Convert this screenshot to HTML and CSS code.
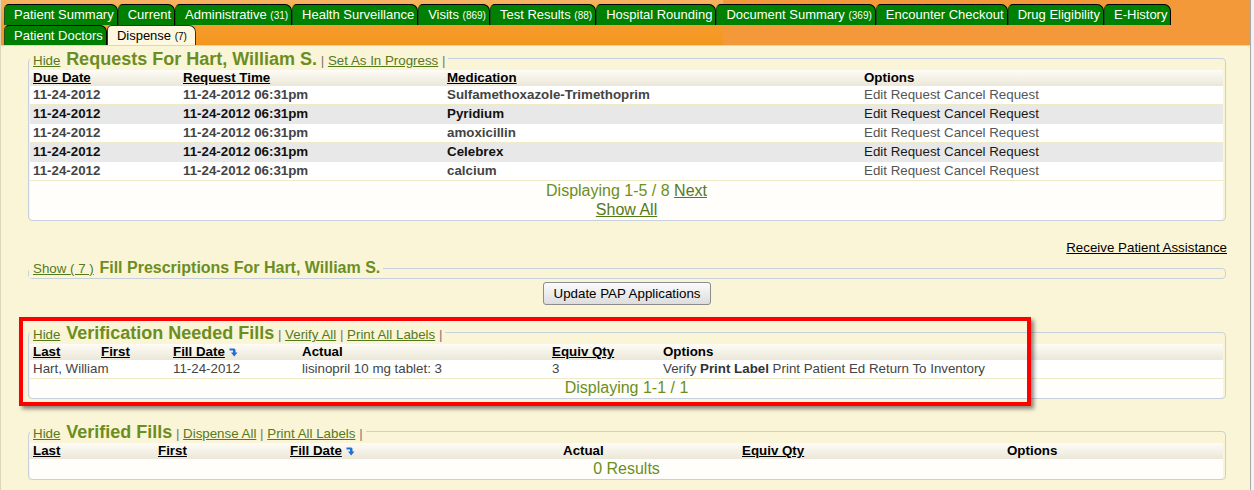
FILE: index.html
```html
<!DOCTYPE html>
<html lang="en">
<head>
  <meta charset="UTF-8">
  <title>Dispense</title>
  <link rel="stylesheet" href="styles.css">
</head>
<body>
<div class="page">

  <div class="header">
    <ul class="tabs tabs-top">
      <li><a href="#">Patient Summary</a></li>
      <li><a href="#">Current</a></li>
      <li><a href="#">Administrative <small>(31)</small></a></li>
      <li><a href="#">Health Surveillance</a></li>
      <li><a href="#">Visits <small>(869)</small></a></li>
      <li><a href="#">Test Results <small>(88)</small></a></li>
      <li><a href="#">Hospital Rounding</a></li>
      <li><a href="#">Document Summary <small>(369)</small></a></li>
      <li><a href="#">Encounter Checkout</a></li>
      <li><a href="#">Drug Eligibility</a></li>
      <li><a href="#">E-History</a></li>
    </ul>
    <ul class="tabs tabs-bottom">
      <li><a href="#">Patient Doctors</a></li>
      <li class="active"><a href="#">Dispense <small>(7)</small></a></li>
    </ul>
  </div>

  <div class="content">

    <!-- Requests -->
    <fieldset class="panel">
      <legend>
        <a href="#" class="lnk">Hide</a>
        <span class="title">Requests For Hart, William S.</span>
        <span class="sep">|</span> <a href="#" class="lnk">Set As In Progress</a> <span class="sep">|</span>
      </legend>
      <table class="grid">
        <colgroup>
          <col style="width:150px"><col style="width:264px"><col style="width:417px"><col>
        </colgroup>
        <thead>
          <tr>
            <th><a href="#">Due Date</a></th>
            <th><a href="#">Request Time</a></th>
            <th><a href="#">Medication</a></th>
            <th>Options</th>
          </tr>
        </thead>
        <tbody class="bold-rows">
          <tr><td>11-24-2012</td><td>11-24-2012 06:31pm</td><td>Sulfamethoxazole-Trimethoprim</td><td class="opt">Edit Request Cancel Request</td></tr>
          <tr><td>11-24-2012</td><td>11-24-2012 06:31pm</td><td>Pyridium</td><td class="opt">Edit Request Cancel Request</td></tr>
          <tr><td>11-24-2012</td><td>11-24-2012 06:31pm</td><td>amoxicillin</td><td class="opt">Edit Request Cancel Request</td></tr>
          <tr><td>11-24-2012</td><td>11-24-2012 06:31pm</td><td>Celebrex</td><td class="opt">Edit Request Cancel Request</td></tr>
          <tr><td>11-24-2012</td><td>11-24-2012 06:31pm</td><td>calcium</td><td class="opt">Edit Request Cancel Request</td></tr>
        </tbody>
      </table>
      <div class="paging two-line">
        Displaying 1-5 / 8 <a href="#">Next</a><br>
        <a href="#">Show All</a>
      </div>
    </fieldset>

    <div class="assist"><a href="#">Receive Patient Assistance</a></div>

    <!-- Fill prescriptions (collapsed) -->
    <fieldset class="panel collapsed">
      <legend>
        <a href="#" class="lnk">Show ( 7 )</a>
        <span class="title small-title">Fill Prescriptions For Hart, William S.</span>
      </legend>
    </fieldset>

    <div class="btn-row">
      <button type="button">Update PAP Applications</button>
    </div>

    <!-- Verification needed -->
    <div class="marked">
      <fieldset class="panel">
        <legend>
          <a href="#" class="lnk">Hide</a>
          <span class="title">Verification Needed Fills</span>
          <span class="sep">|</span> <a href="#" class="lnk">Verify All</a> <span class="sep">|</span> <a href="#" class="lnk">Print All Labels</a> <span class="sep">|</span>
        </legend>
        <table class="grid">
          <colgroup>
            <col style="width:68px"><col style="width:72px"><col style="width:129px"><col style="width:250px"><col style="width:111px"><col>
          </colgroup>
          <thead>
            <tr>
              <th><a href="#">Last</a></th>
              <th><a href="#">First</a></th>
              <th><a href="#">Fill Date</a> <svg class="sort" width="9" height="9" viewBox="0 0 9 9"><path d="M0.5 0.5 H5 Q6.5 0.5 6.5 2 V4.5 H8.5 L5.2 8.5 L2 4.5 H4 V2.6 H0.5 Z" fill="#1f6fd6"/></svg></th>
              <th>Actual</th>
              <th><a href="#">Equiv Qty</a></th>
              <th>Options</th>
            </tr>
          </thead>
          <tbody class="plain-rows">
            <tr>
              <td>Hart, William</td>
              <td></td>
              <td>11-24-2012</td>
              <td>lisinopril 10 mg tablet: 3</td>
              <td>3</td>
              <td>Verify <b>Print Label</b> Print Patient Ed Return To Inventory</td>
            </tr>
          </tbody>
        </table>
        <div class="paging">Displaying 1-1 / 1</div>
      </fieldset>
      <div class="red-mark"></div>
    </div>

    <!-- Verified -->
    <fieldset class="panel verified">
      <legend>
        <a href="#" class="lnk">Hide</a>
        <span class="title">Verified Fills</span>
        <span class="sep">|</span> <a href="#" class="lnk">Dispense All</a> <span class="sep">|</span> <a href="#" class="lnk">Print All Labels</a> <span class="sep">|</span>
      </legend>
      <table class="grid">
        <colgroup>
          <col style="width:125px"><col style="width:132px"><col style="width:273px"><col style="width:179px"><col style="width:265px"><col>
        </colgroup>
        <thead>
          <tr>
            <th><a href="#">Last</a></th>
            <th><a href="#">First</a></th>
            <th><a href="#">Fill Date</a> <svg class="sort" width="9" height="9" viewBox="0 0 9 9"><path d="M0.5 0.5 H5 Q6.5 0.5 6.5 2 V4.5 H8.5 L5.2 8.5 L2 4.5 H4 V2.6 H0.5 Z" fill="#1f6fd6"/></svg></th>
            <th>Actual</th>
            <th><a href="#">Equiv Qty</a></th>
            <th>Options</th>
          </tr>
        </thead>
      </table>
      <div class="paging results">0 Results</div>
    </fieldset>

  </div>
</div>
</body>
</html>
```

FILE: styles.css
```css
* {
  box-sizing: border-box;
}

html {
  background: #f2f2f2;
}

body {
  margin: 0;
  font-family: "Liberation Sans", Arial, sans-serif;
  font-size: 13.33px;
  color: #000;
}

.page {
  width: 1251px;
  height: 490px;
  background: #fbf5d7;
  border-left: 1px solid #ddd6b8;
  border-right: 1px solid #a8a8a8;
  overflow: hidden;
}

/* header + tabs */
.header {
  height: 46px;
  padding: 4px 0 0 3px;
  background: linear-gradient(180deg, #f8b462 0%, #f59c2c 55%, #f3961f 100%) no-repeat 0 0 / 722px 100%, #f4993a;
  border-bottom: 1px solid #cfd6dc;
}

.tabs {
  display: flex;
  margin: 0;
  padding: 0;
  list-style: none;
}

.tabs li a {
  display: block;
  height: 21px;
  line-height: 20px;
  padding: 0 3px 0 9px;
  background: #008000;
  color: #fff;
  font-size: 13px;
  text-decoration: none;
  white-space: nowrap;
  border: 1px solid #000;
  border-bottom: none;
  border-left-color: #1c4d1c;
  border-radius: 5px 7px 0 0;
}

.tabs li a small {
  font-size: 10px;
}

.tabs-bottom li a {
  height: 20px;
  line-height: 19px;
}

.tabs li.active a {
  background: #fdf8df;
  color: #000;
  border-color: #333;
  padding-right: 8px;
}

/* content */
.content {
  padding: 0 24px 0 27px;
}

.panel {
  margin: 2px 0 0;
  padding: 1px 2px 0 1px;
  border: 1px solid #c6d1dd;
  border-radius: 4px;
  min-width: 0;
}

.panel legend {
  margin-left: 0;
  padding: 3px 3px 0 3px;
  line-height: 17px;
  white-space: nowrap;
}

.lnk {
  color: #557a1b;
  font-size: 13.33px;
}

.title {
  color: #6b8e23;
  font-weight: bold;
  font-size: 18px;
  margin-left: 2px;
}

.small-title {
  font-size: 16px;
}

.sep {
  color: #777;
}

.grid {
  width: 100%;
  border-collapse: collapse;
  table-layout: fixed;
  background: #fff;
}

.grid th {
  text-align: left;
  padding: 0 3px;
  height: 16px;
  line-height: 16px;
  font-weight: bold;
  white-space: nowrap;
  background: linear-gradient(#fdfcf6, #ebe7d8);
}

.grid th a {
  color: #000;
}

.grid td {
  padding: 0 3px;
  line-height: 18px;
  border-bottom: 1px solid #efebc9;
  white-space: nowrap;
  color: #444;
}

.bold-rows td {
  font-weight: bold;
}

.bold-rows td.opt {
  font-weight: normal;
  color: #555;
}

.bold-rows tr:nth-child(even) td {
  background: #e8e8e8;
  color: #111;
}

.bold-rows tr:nth-child(even) td.opt {
  color: #1a1a1a;
}

.plain-rows b {
  color: #333;
}

.sort {
  vertical-align: -1px;
}

.paging {
  background: #fffefa;
  text-align: center;
  color: #6b8e23;
  font-size: 16px;
  line-height: 18px;
  padding-bottom: 1px;
  border-radius: 0 0 4px 4px;
}

.paging a {
  color: #557a1b;
}

.two-line {
  line-height: 19px;
}

.results {
  line-height: 20px;
  padding-bottom: 0;
}

.assist {
  margin-top: 19px;
  text-align: right;
  line-height: 16px;
  margin-right: -1px;
}

.assist a {
  color: #000;
}

.collapsed {
  margin-top: 3px;
  padding: 0;
}

.collapsed legend {
  padding: 0 3px 0 4px;
  line-height: 18px;
}

.btn-row {
  margin-top: 3px;
  text-align: center;
}

.btn-row button {
  height: 23px;
  padding: 0 10px;
  font-family: "Liberation Sans", Arial, sans-serif;
  font-size: 13.33px;
  color: #000;
  background: linear-gradient(#fbfbfb, #dddddd);
  border: 1px solid #8c8c8c;
  border-radius: 3px;
}

/* annotated block */
.marked {
  position: relative;
  margin-top: 17px;
}

.marked .panel {
  margin-top: 0;
}

.red-mark {
  position: absolute;
  left: -9px;
  top: -5px;
  width: 1012px;
  height: 89px;
  border: 4px solid #ff0000;
  box-shadow: 3px 3px 4px rgba(0, 0, 0, 0.45);
  pointer-events: none;
}

.verified {
  margin-top: 22px;
}
```
